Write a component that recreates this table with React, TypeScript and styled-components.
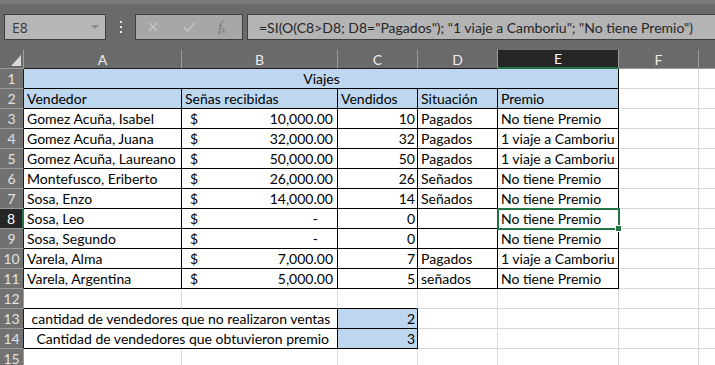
import { Fragment } from "react";
import styled, { createGlobalStyle, css } from "styled-components";

const GREEN = "#217346";
const GRID = "#d9d9d9";
const FILL = "#bdd7ee";
const CELL_FONT = `"Lato", "Liberation Sans", sans-serif`;

type Align = "left" | "right" | "center";

interface CellSpec {
  text?: string;
  span?: number;
  align?: Align;
  fill?: boolean;
  money?: string;
}

// G is only a sliver at the right edge, so it gets no letter
const LETTERS = ["A", "B", "C", "D", "E", "F", ""];

const sellers: string[][] = [
  ["Gomez Acuña, Isabel", "10,000.00", "10", "Pagados", "No tiene Premio"],
  ["Gomez Acuña, Juana", "32,000.00", "32", "Pagados", "1 viaje a Camboriu"],
  ["Gomez Acuña, Laureano", "50,000.00", "50", "Pagados", "1 viaje a Camboriu"],
  ["Montefusco, Eriberto", "26,000.00", "26", "Señados", "No tiene Premio"],
  ["Sosa, Enzo", "14,000.00", "14", "Señados", "No tiene Premio"],
  ["Sosa, Leo", "-", "0", "", "No tiene Premio"],
  ["Sosa, Segundo", "-", "0", "", "No tiene Premio"],
  ["Varela, Alma", "7,000.00", "7", "Pagados", "1 viaje a Camboriu"],
  ["Varela, Argentina", "5,000.00", "5", "señados", "No tiene Premio"],
];

const empty = (n: number): CellSpec[] => Array.from({ length: n }, () => ({}));

const rows: CellSpec[][] = [
  [{ text: "Viajes", span: 5, align: "center", fill: true }, ...empty(2)],
  [
    ...["Vendedor", "Señas recibidas", "Vendidos", "Situación", "Premio"].map(
      (t): CellSpec => ({ text: t, fill: true })
    ),
    ...empty(2),
  ],
  ...sellers.map(([name, amount, sold, state, prize]): CellSpec[] => [
    { text: name },
    { money: amount },
    { text: sold, align: "right" },
    { text: state },
    { text: prize },
    ...empty(2),
  ]),
  empty(7),
  [
    { text: "cantidad de vendedores que no realizaron ventas", span: 2, align: "center" },
    { text: "2", align: "right", fill: true },
    ...empty(4),
  ],
  [
    { text: " Cantidad de vendedores que obtuvieron premio", span: 2, align: "center" },
    { text: "3", align: "right", fill: true },
    ...empty(4),
  ],
  empty(7),
];

// cells inside a bordered range
const boxed = (r: number, c: number) =>
  (r >= 1 && r <= 11 && c >= 1 && c <= 5) || (r >= 13 && r <= 14 && c >= 1 && c <= 3);

const SEL_ROW = 8;
const SEL_COL = 5;

const GlobalStyle = createGlobalStyle`
  body {
    margin: 0;
    background: #ffffff;
    font-family: ${CELL_FONT};
  }
`;

const Window = styled.div`
  width: 715px;
  height: 365px;
  overflow: hidden;
  background: #6a6a6a;
`;

const TopStrip = styled.div`
  height: 4px;
  background: #7a7a7a;
`;

const FormulaBar = styled.div`
  display: flex;
  align-items: center;
  height: 46px;
  padding-left: 4px;
  background: #6a6a6a;
`;

const NameBox = styled.div`
  box-sizing: border-box;
  width: 102px;
  height: 26px;
  display: flex;
  align-items: center;
  justify-content: space-between;
  padding: 0 6px 0 7px;
  background: #b6b6b6;
  border: 1px solid #3e3e3e;
  color: #3a3a3a;
  font-family: "Open Sans", "Liberation Sans", sans-serif;
  font-size: 14px;
`;

const Caret = styled.span`
  width: 0;
  height: 0;
  border-left: 4px solid transparent;
  border-right: 4px solid transparent;
  border-top: 4px solid #8a8a8a;
`;

const Dots = styled.div`
  display: flex;
  flex-direction: column;
  gap: 3px;
  margin: 0 13px 0 14px;
  span {
    width: 2px;
    height: 2px;
    background: #e4e4e4;
  }
`;

const FxBox = styled.div`
  box-sizing: border-box;
  width: 108px;
  height: 26px;
  display: flex;
  align-items: center;
  gap: 22px;
  padding: 0 10px;
  background: #a7a7a7;
  border: 1px solid #3e3e3e;
`;

const Fx = styled.span`
  font-family: "Liberation Serif", serif;
  font-style: italic;
  font-size: 15px;
  color: #7c7c7c;
  letter-spacing: -1px;
  sub {
    font-size: 10px;
    vertical-align: -1px;
  }
`;

const FormulaInput = styled.div`
  box-sizing: border-box;
  flex: 1;
  height: 26px;
  margin-left: 4px;
  display: flex;
  align-items: center;
  padding-left: 11px;
  background: #b4b4b4;
  border: 1px solid #3e3e3e;
  border-right: none;
  color: #262626;
  font-family: ${CELL_FONT};
  font-size: 14px;
  white-space: nowrap;
`;

const Sheet = styled.div`
  display: grid;
  grid-template-columns: 24px 158px 156px 80px 80px 121px 80px 80px;
  grid-template-rows: 19px repeat(15, 20px);
  font-family: ${CELL_FONT};
  font-size: 14px;
`;

const Corner = styled.div`
  box-sizing: border-box;
  position: relative;
  background: #6a6a6a;
  border-right: 1px solid #9c9c9c;
  border-bottom: 1px solid #9c9c9c;
  &::after {
    content: "";
    position: absolute;
    right: 2px;
    bottom: 2px;
    border-left: 10px solid transparent;
    border-bottom: 11px solid #dadada;
  }
`;

const ColHead = styled.div<{ $active: boolean; $edge: boolean }>`
  box-sizing: border-box;
  display: flex;
  align-items: center;
  justify-content: center;
  background: ${(p) => (p.$active ? "#262626" : "#6a6a6a")};
  color: ${(p) => (p.$active ? "#ffffff" : "#ececec")};
  border-right: 1px solid #9c9c9c;
  border-bottom: ${(p) =>
    p.$active ? `2px solid ${GREEN}` : `1px solid ${p.$edge ? "#1e1e1e" : "#9c9c9c"}`};
  font-size: 14px;
`;

const RowHead = styled.div<{ $active: boolean; $edge: boolean }>`
  box-sizing: border-box;
  display: flex;
  align-items: center;
  justify-content: center;
  background: ${(p) => (p.$active ? "#262626" : "#717171")};
  color: ${(p) => (p.$active ? "#ffffff" : "#e2e2e2")};
  border-bottom: 1px solid #9a9a9a;
  border-right: ${(p) =>
    p.$active ? `2px solid ${GREEN}` : `1px solid ${p.$edge ? "#1e1e1e" : "#9a9a9a"}`};
  font-size: 14px;
`;

const Cell = styled.div<{
  $span: number;
  $align: Align;
  $fill: boolean;
  $right: boolean;
  $bottom: boolean;
  $selected: boolean;
}>`
  grid-column: span ${(p) => p.$span};
  box-sizing: border-box;
  position: relative;
  display: flex;
  align-items: flex-end;
  justify-content: ${(p) =>
    p.$align === "right" ? "flex-end" : p.$align === "center" ? "center" : "flex-start"};
  padding: 0 2px 0 3px;
  background: ${(p) => (p.$fill ? FILL : "#ffffff")};
  border-right: 1px solid ${(p) => (p.$right ? "#000000" : GRID)};
  border-bottom: 1px solid ${(p) => (p.$bottom ? "#000000" : GRID)};
  color: #000000;
  line-height: 18px;
  white-space: pre;
  ${(p) =>
    p.$selected &&
    css`
      z-index: 2;
      &::after {
        content: "";
        position: absolute;
        left: -1px;
        top: -1px;
        right: -2px;
        bottom: -2px;
        border: 2px solid ${GREEN};
      }
      &::before {
        content: "";
        position: absolute;
        right: -4px;
        bottom: -4px;
        width: 5px;
        height: 5px;
        background: ${GREEN};
        border: 1px solid #ffffff;
        z-index: 3;
      }
    `}
`;

const Money = styled.div<{ $dash: boolean }>`
  flex: 1;
  display: flex;
  justify-content: space-between;
  padding: 0 ${(p) => (p.$dash ? "17px" : "2px")} 0 5px;
`;

const CancelIcon = () => (
  <svg width="14" height="14" viewBox="0 0 14 14">
    <path d="M3 3 L11 11 M11 3 L3 11" stroke="#c4c4c4" strokeWidth="1.6" />
  </svg>
);

const EnterIcon = () => (
  <svg width="14" height="14" viewBox="0 0 14 14">
    <path d="M2 7.5 L5.5 11 L12.5 3" stroke="#c4c4c4" strokeWidth="1.6" fill="none" />
  </svg>
);

export default function App() {
  return (
    <Window>
      <GlobalStyle />
      <TopStrip />
      <FormulaBar>
        <NameBox>
          E8
          <Caret />
        </NameBox>
        <Dots>
          <span />
          <span />
          <span />
        </Dots>
        <FxBox>
          <CancelIcon />
          <EnterIcon />
          <Fx>
            f<sub>x</sub>
          </Fx>
        </FxBox>
        <FormulaInput>
          =SI(O(C8&gt;D8; D8="Pagados"); "1 viaje a Camboriu"; "No tiene Premio")
        </FormulaInput>
      </FormulaBar>
      <Sheet>
        <Corner />
        {LETTERS.map((l, i) => (
          <ColHead key={i} $active={i + 1 === SEL_COL} $edge={boxed(1, i + 1)}>
            {l}
          </ColHead>
        ))}
        {rows.map((cells, i) => {
          const r = i + 1;
          let c = 1;
          return (
            <Fragment key={r}>
              <RowHead $active={r === SEL_ROW} $edge={boxed(r, 1)}>
                {r}
              </RowHead>
              {cells.map((cell, j) => {
                const span = cell.span ?? 1;
                const col = c;
                c += span;
                return (
                  <Cell
                    key={j}
                    $span={span}
                    $align={cell.align ?? "left"}
                    $fill={!!cell.fill}
                    $right={boxed(r, col + span - 1) || boxed(r, col + span)}
                    $bottom={boxed(r, col) || boxed(r + 1, col)}
                    $selected={r === SEL_ROW && col === SEL_COL}
                  >
                    {cell.money ? (
                      <Money $dash={cell.money === "-"}>
                        <span>$</span>
                        <span>{cell.money}</span>
                      </Money>
                    ) : (
                      cell.text
                    )}
                  </Cell>
                );
              })}
            </Fragment>
          );
        })}
      </Sheet>
    </Window>
  );
}
